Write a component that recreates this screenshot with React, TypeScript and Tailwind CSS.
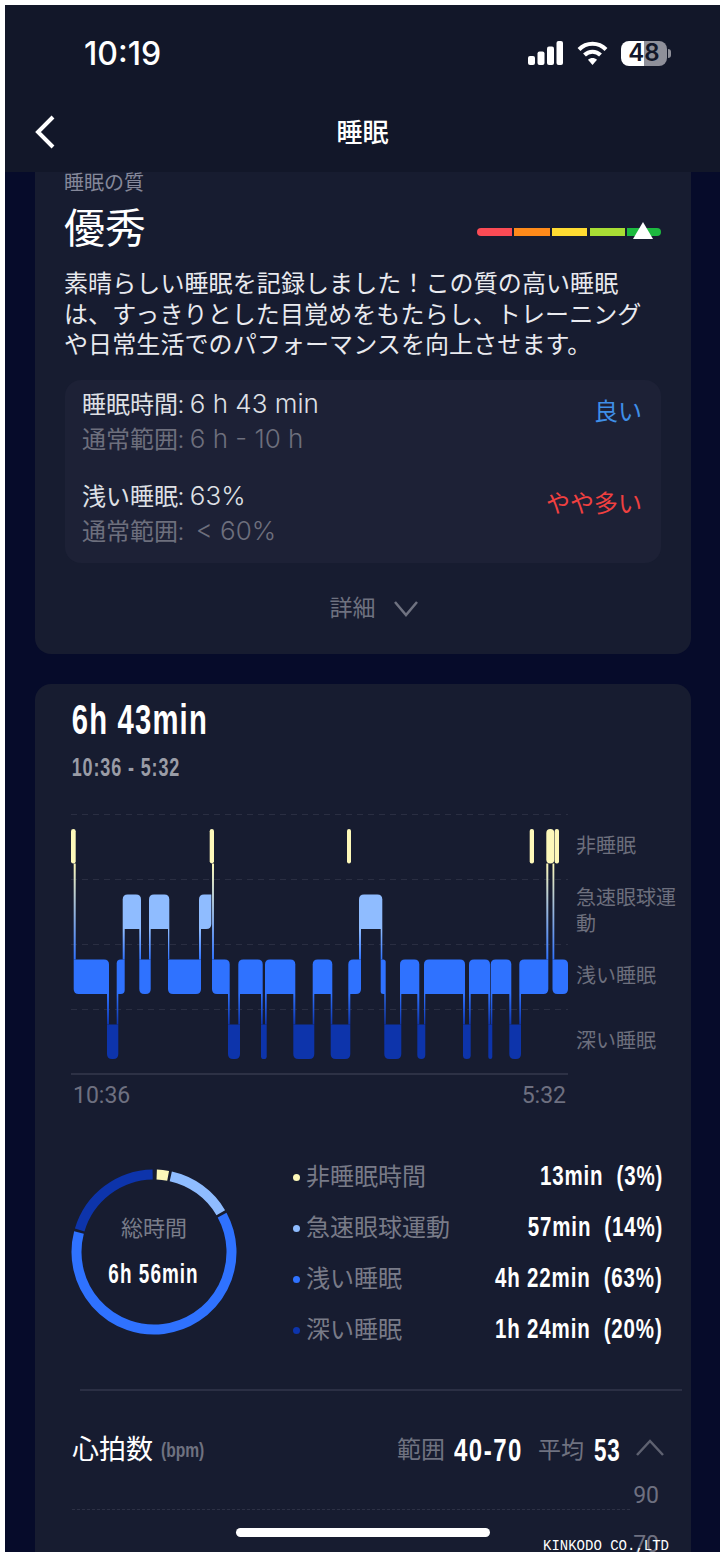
const COLORS = ["#fdf8b9", "#8fbcff", "#2f72ff", "#0d34ab"];
const LEVEL_TOP = [829, 894.5, 959.5, 1024.5];
const BAND = 34.5;

// level: 0 non-sleep, 1 REM, 2 light, 3 deep
const stages: [number, number, number][] = [
  [0, 71, 75.7], [2, 73.7, 109], [3, 107, 118.3], [2, 116.7, 124.7], [1, 122.7, 141],
  [2, 139.3, 150.7], [1, 149, 169.3], [2, 168, 201], [1, 199, 211.3], [0, 209.7, 214],
  [2, 212, 229.7], [3, 228, 240], [2, 238.3, 262.7], [3, 261, 266.7], [2, 265, 295.3],
  [3, 293.3, 314.3], [2, 312.7, 332.3], [3, 330.7, 350.3], [2, 348.3, 361], [1, 359, 382.3],
  [2, 380.7, 385.7], [3, 384.3, 401.3], [2, 400, 419.3], [3, 417.3, 425.3], [2, 424, 465],
  [3, 463, 470.7], [2, 469, 490], [3, 488.3, 492.3], [2, 490.7, 511.3], [3, 509.3, 521],
  [2, 519.3, 548.3], [0, 546.3, 554.3], [2, 552.5, 568],
];
const extras: [number, number][] = [[347, 351], [529.7, 534], [554.7, 559]];

function bandPath(x0: number, x1: number, y0: number, tl: boolean, tr: boolean, br: boolean, bl: boolean) {
  const y1 = y0 + BAND;
  const r = Math.min(5, (x1 - x0) / 2);
  const a = tl ? r : 0, b = tr ? r : 0, c = br ? r : 0, d = bl ? r : 0;
  return `M${x0 + a} ${y0}H${x1 - b}Q${x1} ${y0} ${x1} ${y0 + b}V${y1 - c}Q${x1} ${y1} ${x1 - c} ${y1}H${x0 + d}Q${x0} ${y1} ${x0} ${y1 - d}V${y0 + a}Q${x0} ${y0} ${x0 + a} ${y0}Z`;
}

function SleepChart() {
  return (
    <svg width="497" height="261" viewBox="71 814 497 261" className="shrink-0">
      <defs>
        <linearGradient id="g02" x1="0" y1="0" x2="0" y2="1">
          <stop offset="0" stopColor={COLORS[0]} />
          <stop offset="1" stopColor={COLORS[2]} />
        </linearGradient>
        <linearGradient id="g12" x1="0" y1="0" x2="0" y2="1">
          <stop offset="0" stopColor={COLORS[1]} />
          <stop offset="1" stopColor={COLORS[2]} />
        </linearGradient>
        <linearGradient id="g23" x1="0" y1="0" x2="0" y2="1">
          <stop offset="0" stopColor={COLORS[2]} />
          <stop offset="1" stopColor={COLORS[3]} />
        </linearGradient>
      </defs>
      {[814.5, 879.5, 944.5, 1009.5].map((y) => (
        <line key={y} x1="71" x2="568" y1={y} y2={y} stroke="#2a2e42" strokeWidth="1" strokeDasharray="6 5" />
      ))}
      <line x1="71" x2="568" y1="1074" y2="1074" stroke="#2d3145" strokeWidth="2" />
      {stages.map(([lvl, x0, x1], i) => {
        const prev = stages[i - 1]?.[0];
        const next = stages[i + 1]?.[0];
        const tl = prev === undefined || prev > lvl;
        const bl = prev === undefined || prev < lvl;
        const tr = next === undefined || next > lvl;
        const br = next === undefined || next < lvl;
        const isNon = lvl === 0;
        return (
          <path
            key={i}
            d={bandPath(x0, x1, LEVEL_TOP[lvl], tl || isNon, tr || isNon, br || isNon, bl || isNon)}
            fill={COLORS[lvl]}
          />
        );
      })}
      {stages.slice(1).map(([lvl, x0], i) => {
        const [pl, , px1] = stages[i];
        const up = Math.min(lvl, pl);
        const down = Math.max(lvl, pl);
        const top = LEVEL_TOP[up] + BAND;
        return (
          <rect
            key={i}
            x={x0}
            width={Math.max(px1 - x0, 1)}
            y={top}
            height={LEVEL_TOP[down] - top}
            fill={`url(#g${up}${down})`}
          />
        );
      })}
      {extras.map(([x0, x1]) => (
        <rect key={x0} x={x0} width={x1 - x0} y="829" height={BAND} rx="2" fill={COLORS[0]} />
      ))}
    </svg>
  );
}

function arc(start: number, end: number) {
  const pt = (a: number) => {
    const t = (a * Math.PI) / 180;
    return `${83 + 77.5 * Math.sin(t)} ${83 - 77.5 * Math.cos(t)}`;
  };
  return `M${pt(start)}A77.5 77.5 0 ${end - start > 180 ? 1 : 0} 1 ${pt(end)}`;
}

function Donut() {
  return (
    <div className="relative mt-[17.500px] h-[166px] w-[166px] shrink-0">
      <svg width="166" height="166" viewBox="0 0 166 166" fill="none" strokeWidth="10">
        <path d={arc(2, 10.5)} stroke={COLORS[0]} />
        <path d={arc(12.5, 59.5)} stroke={COLORS[1]} />
        <path d={arc(61.5, 284.5)} stroke={COLORS[2]} />
        <path d={arc(286.5, 359)} stroke={COLORS[3]} />
      </svg>
      <div className="absolute inset-0 flex flex-col items-center">
        <span className="mt-[46px] h-[28px] text-[22px] leading-[28px] text-[#7a7d8a]">総時間</span>
        <span className="mt-[15px] scale-x-[0.7] font-['Liberation_Sans',sans-serif] text-[27px] leading-[32px] font-bold tracking-[1.500px] whitespace-nowrap text-white">
          6h 56min
        </span>
      </div>
    </div>
  );
}

const breakdown = [
  { label: "非睡眠時間", value: "13min  (3%)", color: "bg-[#fdf8b9]" },
  { label: "急速眼球運動", value: "57min  (14%)", color: "bg-[#8fbcff]" },
  { label: "浅い睡眠", value: "4h 22min  (63%)", color: "bg-[#2f72ff]" },
  { label: "深い睡眠", value: "1h 24min  (20%)", color: "bg-[#0d34ab]" },
];

function StatusIcons() {
  return (
    <div className="flex items-center">
      <svg width="35" height="24" viewBox="0 0 35 24" fill="#fff">
        <rect x="0" y="15" width="7" height="9" rx="2" />
        <rect x="9.5" y="10.5" width="7" height="13.5" rx="2" />
        <rect x="19" y="5.5" width="7" height="18.5" rx="2" />
        <rect x="28.5" y="0" width="6.5" height="24" rx="2" />
      </svg>
      <svg className="ml-[14px]" width="31" height="24" viewBox="0 0 31 24" fill="none" stroke="#fff" strokeWidth="4">
        <path d="M2 8.500C9.500 .8 21.500 .8 29 8.500" />
        <path d="M7.500 14c4.500-4.500 11.500-4.500 16 0" />
        <path d="M11 18.800 15.500 24 20 18.800C17.500 16.500 13.500 16.500 11 18.800Z" fill="#fff" stroke="none" />
      </svg>
      <div className="ml-[13px] flex h-[25px] w-[46px] items-center justify-center rounded-[8px] bg-[linear-gradient(90deg,#ffffff_50%,#8f909a_50%)] font-['Inter',sans-serif] text-[24px] leading-none font-semibold text-[#121729]">
        48
      </div>
      <div className="ml-[1px] h-[9px] w-[3px] rounded-r-full bg-[#8f909a]" />
    </div>
  );
}

const latin = "font-['Inter',sans-serif] text-[26px] leading-none font-light";

export default function App() {
  return (
    <div className="h-[1558px] w-[725px] bg-white px-[5px] pt-[5px] font-['Roboto','Noto_Sans_CJK_JP',sans-serif]">
      <div className="relative h-[1547px] overflow-hidden bg-[#060b2a]">
        <header className="h-[167px] bg-[#121729] pt-[29px] text-white">
          <div className="flex h-[40px] items-center justify-between pr-[49px] pl-[79px]">
            <span className="font-['Inter',sans-serif] text-[32px] leading-none font-medium">10:19</span>
            <div className="-mt-[2px]">
              <StatusIcons />
            </div>
          </div>
          <div className="relative mt-[29px] flex h-[60px] items-center justify-center">
            <svg className="absolute left-[28px] -mt-[2px]" width="24" height="36" viewBox="0 0 24 36" fill="none" stroke="#fff" strokeWidth="4">
              <path d="M20 3 5 18l15 15" />
            </svg>
            <span className="text-[26px] leading-none font-medium">睡眠</span>
          </div>
        </header>

        <section className="mr-[29px] ml-[30px] h-[482px] rounded-b-2xl bg-[#171c30] px-[30px]">
          <p className="-ml-[1px] h-[22px] text-[20px] leading-[22px] text-[#85889a]">睡眠の質</p>
          <div className="mt-[5px] -ml-[1px] flex h-[60px] items-center justify-between">
            <span className="text-[41px] leading-none text-white">優秀</span>
            <div className="relative mt-[5px] flex gap-[2.500px]">
              <div className="h-[8px] w-[34.500px] rounded-l-full bg-[#fb4b55]" />
              <div className="h-[8px] w-[35.500px] bg-[#ff8a1a]" />
              <div className="h-[8px] w-[35px] bg-[#ffdb32]" />
              <div className="h-[8px] w-[35px] bg-[#a8dd34]" />
              <div className="h-[8px] w-[34px] rounded-r-full bg-[#1db93f]" />
              <svg className="absolute top-[-6px] right-[8px]" width="20" height="17" viewBox="0 0 20 17" fill="#fff">
                <path d="M10 0 20 17H0Z" />
              </svg>
            </div>
          </div>
          <p className="mt-[10px] -ml-[1px] text-[24px] leading-[30.500px] tracking-[0.100px] text-[#e9eaef]">
            素晴らしい睡眠を記録しました！この質の高い睡眠
            <br />
            は、すっきりとした目覚めをもたらし、トレーニング
            <br />
            や日常生活でのパフォーマンスを向上させます。
          </p>
          <div className="mt-[19.500px] flex h-[183px] flex-col gap-[22px] rounded-2xl bg-[#1d2136] pt-[7.500px] pr-[19px] pl-[17px] text-[24px] leading-[35px]">
            <div className="flex items-start justify-between">
              <div>
                <p className="text-[#dfe0e5]">
                  睡眠時間: <span className={latin}>6 h 43 min</span>
                </p>
                <p className="text-[#6d6f7d]">
                  通常範囲: <span className={latin}>6 h - 10 h</span>
                </p>
              </div>
              <span className="pt-[7px] text-[#3f8fe8]">良い</span>
            </div>
            <div className="flex items-start justify-between">
              <div>
                <p className="text-[#dfe0e5]">
                  浅い睡眠: <span className={latin}>63%</span>
                </p>
                <p className="whitespace-pre text-[#6d6f7d]">
                  通常範囲:  <span className={latin}>&lt; 60%</span>
                </p>
              </div>
              <span className="pt-[7px] text-[#f04040]">やや多い</span>
            </div>
          </div>
          <div className="mt-[23px] flex h-[44px] items-center justify-center gap-[17px] pl-[22px]">
            <span className="text-[23px] leading-none text-[#6f7280]">詳細</span>
            <svg width="26" height="17" viewBox="0 0 26 17" fill="none" stroke="#6f7280" strokeWidth="2.500">
              <path d="m2 2 11 13L24 2" />
            </svg>
          </div>
        </section>

        <section className="mt-[30px] mr-[29px] ml-[30px] h-[900px] rounded-t-2xl bg-[#171c30] pt-[10px] pr-[28px] pl-[36px]">
          <p className="h-[50px] w-[200px] origin-left scale-x-[0.68] pl-[1px] font-['Liberation_Sans',sans-serif] text-[43px] leading-[50px] font-bold tracking-[1.750px] whitespace-nowrap text-white">
            6h 43min
          </p>
          <p className="mt-[7.500px] h-[30px] w-[150px] origin-left scale-x-[0.72] pl-[1px] font-['Liberation_Sans',sans-serif] text-[25px] leading-[30px] font-bold tracking-[1.200px] whitespace-nowrap text-[#9a9ca6]">
            10:36 - 5:32
          </p>

          <div className="mt-[32.500px] flex gap-[8px]">
            <SleepChart />
            <div className="-mt-[1px] -mr-[20px] grid h-[260px] grid-rows-4 items-center text-[20px] leading-[26px] text-[#6d6f7d]">
              <span>非睡眠</span>
              <span>急速眼球運動</span>
              <span>浅い睡眠</span>
              <span>深い睡眠</span>
            </div>
          </div>

          <div className="mt-[5px] flex h-[30px] w-[495px] items-center justify-between pl-[2px] text-[23px] leading-none text-[#6e7080]">
            <span>10:36</span>
            <span>5:32</span>
          </div>

          <div className="mt-[41.500px] flex items-start">
            <Donut />
            <div className="ml-[56px] flex-1">
              {breakdown.map((row) => (
                <div key={row.label} className="flex h-[51px] items-center justify-between">
                  <div className="flex items-center gap-[6px]">
                    <span className={`h-[7px] w-[7px] rounded-full ${row.color}`} />
                    <span className="text-[24px] leading-none text-[#797b88]">{row.label}</span>
                  </div>
                  <span className="-mt-[2px] origin-right scale-x-[0.76] font-['Liberation_Sans',sans-serif] text-[27px] leading-none font-bold tracking-[1.100px] whitespace-pre text-white">
                    {row.value}
                  </span>
                </div>
              ))}
            </div>
          </div>

          <div className="mt-[33.500px] -mr-[19px] ml-[9px] h-[2px] bg-[#2b2f44]" />

          <div className="mt-[39px] -mr-[2px] flex h-[40px] items-center justify-between">
            <div className="flex items-center gap-[8px] pl-[1px]">
              <span className="text-[27px] leading-none text-white">心拍数</span>
              <span className="origin-left scale-x-[0.78] font-['Liberation_Sans',sans-serif] text-[20px] leading-none font-bold text-[#6f7280]">(bpm)</span>
            </div>
            <div className="flex items-center">
              <span className="text-[24px] leading-none text-[#6f7280]">範囲</span>
              <span className="ml-[9px] w-[68px] origin-left scale-x-[0.75] font-['Liberation_Sans',sans-serif] text-[32px] leading-none font-bold tracking-[2px] whitespace-nowrap text-white">40-70</span>
              <span className="ml-[16px] text-[23px] leading-none text-[#6f7280]">平均</span>
              <span className="ml-[10px] w-[27px] origin-left scale-x-[0.7] font-['Liberation_Sans',sans-serif] text-[32px] leading-none font-bold tracking-[1.200px] whitespace-nowrap text-white">53</span>
              <svg className="-mt-[5px] ml-[14px]" width="30" height="17" viewBox="0 0 30 17" fill="none" stroke="#5e6170" strokeWidth="2.500">
                <path d="m2 16 13-14 13 14" />
              </svg>
            </div>
          </div>

          <p className="mt-[13px] h-[26px] pr-[4px] text-right text-[23px] leading-[26px] text-[#6e7080]">90</p>
          <div className="mr-[33px] ml-[1px] border-t border-dashed border-[#2d3145]" />
          <p className="mt-[22px] h-[26px] pr-[4px] text-right text-[23px] leading-[26px] text-[#6e7080]">70</p>
        </section>

        <div className="absolute top-[1523px] left-[231px] h-[9px] w-[254px] rounded-full bg-white" />
        <span className="absolute top-[1533px] left-[538px] font-['Liberation_Mono',monospace] text-[14px] leading-[16px] text-white">
          KINKODO CO.,LTD
        </span>
      </div>
    </div>
  );
}
